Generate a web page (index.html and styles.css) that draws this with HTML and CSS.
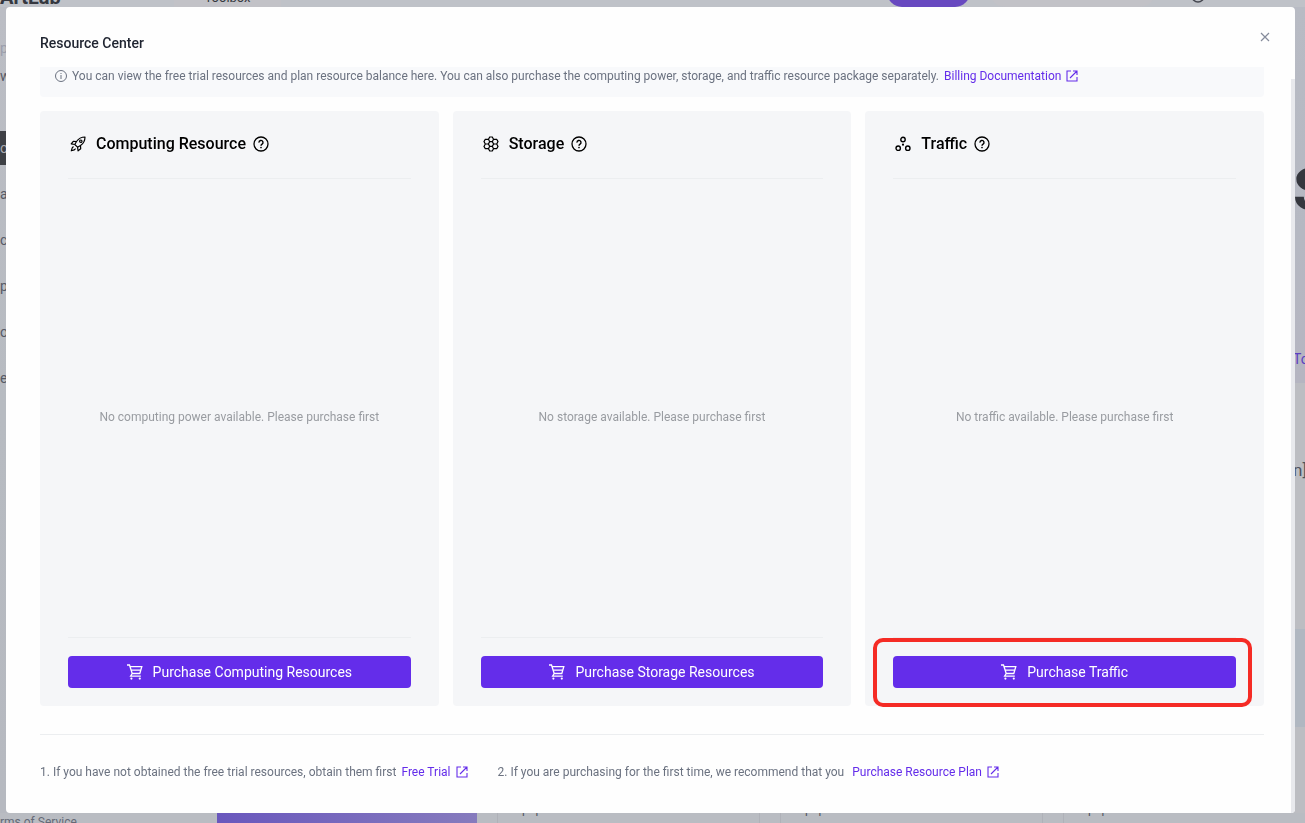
FILE: index.html
```
<!doctype html>
<html lang="en">
<head>
	<meta charset="UTF-8" />
	<title>Resource Center</title>
	<link rel="stylesheet" href="styles.css">
</head>
<body>
	<svg class="sprite" width="0" height="0">
		<symbol id="icon-link" viewBox="0 0 24 24">
			<path d="M10 2H2v20h20v-8M14 2h8v8M22 2L8 16" fill="none" stroke="currentColor" stroke-width="2.2" />
		</symbol>
		<symbol id="icon-help" viewBox="0 0 16 16">
			<circle cx="8" cy="8" r="7" fill="none" stroke="currentColor" stroke-width="1.3" />
			<path d="M6 6.600a2 2 0 1 1 3.100 1.500C8.400 8.600 8 8.900 8 9.700" fill="none" stroke="currentColor" stroke-width="1.400" />
			<circle cx="8" cy="11.500" r=".85" fill="currentColor" />
		</symbol>
		<symbol id="icon-cart" viewBox="0 0 16 16">
			<path d="M0 1h2.500l2.700 8.500h7.600l2-6.800H3.200M5.200 9.500l-1.600 2.700h10.200M4.500 6.200h9" fill="none" stroke="currentColor" stroke-width="1.300" />
			<circle cx="4.400" cy="14.600" r="1.100" fill="currentColor" />
			<circle cx="12.800" cy="14.600" r="1.100" fill="currentColor" />
		</symbol>
	</svg>

	<!-- page behind the dialog -->
	<div class="page">
		<div class="topbar">
			<div class="brand">ArtLab</div>
			<div class="tab">Toolbox</div>
			<div class="pill"></div>
			<div class="search"></div>
			<svg class="user" width="14" height="14" viewBox="0 0 14 14"><circle cx="7" cy="7" r="6" fill="none" stroke="#44464f" stroke-width="1.5" /></svg>
		</div>
		<div class="middle">
			<div class="sidebar">
				<span class="light">p</span>
				<span class="second">w</span>
				<span class="current">oo</span>
				<span>a</span>
				<span>c</span>
				<span>p</span>
				<span>o</span>
				<span>e</span>
			</div>
			<div class="hero">
				<div class="hero-top">
					<div class="headline">S</div>
					<div class="more">To</div>
				</div>
				<div class="note">n]</div>
				<div class="thumb"></div>
			</div>
		</div>
		<div class="bottom">
			<div class="terms">rms of Service</div>
			<div class="promo"></div>
			<div class="tile">pop</div>
			<div class="tile">pop</div>
			<div class="tile">pop</div>
		</div>
	</div>

	<div class="mask">
		<div class="dialog" role="dialog" aria-labelledby="title">
			<div class="dialog-head">
				<h1 id="title">Resource Center</h1>
				<button class="close" aria-label="Close">
					<svg width="10" height="10" viewBox="0 0 10 10"><path d="M1 1l8 8M9 1L1 9" stroke="currentColor" stroke-width="1.2" /></svg>
				</button>
			</div>
			<div class="dialog-body">
				<div class="tip">
					<svg width="12" height="12" viewBox="0 0 12 12"><circle cx="6" cy="6" r="5.500" fill="none" stroke="currentColor" /><path d="M6 5v4M6 3v1" stroke="currentColor" /></svg>
					<span>You can view the free trial resources and plan resource balance here. You can also purchase the computing power, storage, and traffic resource package separately.</span>
					<a href="#">Billing Documentation <svg width="12" height="12"><use href="#icon-link" /></svg></a>
				</div>

				<div class="cards">
					<div class="card">
						<div class="card-head">
							<svg width="16" height="16" viewBox="0 0 16 16" fill="none" stroke="currentColor" stroke-width="1.200" stroke-linejoin="round">
								<path d="M15 1c-4 0-6.500 1.500-8.500 4.500L4.800 8.500l2.700 2.700 3-1.700C13.500 7.500 15 5 15 1z" />
								<path d="M6.500 5.500L3.300 5.300 1.200 7.900l3.600.6M10.500 9.500l.2 3.200-2.600 2.100-.6-3.600M3.500 10.500l-1.300 1.300-.9 3 3-.9 1.300-1.300" />
								<circle cx="10.800" cy="5.200" r="1.200" />
							</svg>
							<h2>Computing Resource</h2>
							<svg class="help" width="16" height="16"><use href="#icon-help" /></svg>
						</div>
						<div class="empty">No computing power available. Please purchase first</div>
						<div class="card-foot">
							<button class="buy"><svg width="16" height="16"><use href="#icon-cart" /></svg>Purchase Computing Resources</button>
						</div>
					</div>
					<div class="card">
						<div class="card-head">
							<svg width="16" height="16" viewBox="0 0 16 16" fill="none" stroke="currentColor" stroke-width="1.200">
								<path d="M6.700 5.700h2.600L10.600 8l-1.300 2.300H6.700L5.400 8z" />
								<path d="M6.700 5.700L5.500 3.300 6.700 1h2.600l1.200 2.300-1.200 2.400M6.700 10.300l-1.200 2.400L6.700 15h2.600l1.200-2.300-1.200-2.400" />
								<path d="M5.500 3.300H2.300L1 5.600 2.300 8 1 10.400l1.300 2.300h3.200M2.300 8h3.100M10.500 3.300h3.200L15 5.600 13.700 8l1.300 2.400-1.300 2.300h-3.200M10.600 8h3.100" />
							</svg>
							<h2>Storage</h2>
							<svg class="help" width="16" height="16"><use href="#icon-help" /></svg>
						</div>
						<div class="empty">No storage available. Please purchase first</div>
						<div class="card-foot">
							<button class="buy"><svg width="16" height="16"><use href="#icon-cart" /></svg>Purchase Storage Resources</button>
						</div>
					</div>
					<div class="card">
						<div class="card-head">
							<svg width="16" height="16" viewBox="0 0 16 16" fill="none" stroke="currentColor" stroke-width="1.400">
								<circle cx="8" cy="3.500" r="2.200" />
								<circle cx="3.200" cy="12.200" r="2.200" />
								<circle cx="12.800" cy="12.200" r="2.200" />
								<circle cx="8" cy="8.700" r="1.100" fill="currentColor" stroke="none" />
							</svg>
							<h2>Traffic</h2>
							<svg class="help" width="16" height="16"><use href="#icon-help" /></svg>
						</div>
						<div class="empty">No traffic available. Please purchase first</div>
						<div class="card-foot marked">
							<button class="buy"><svg width="16" height="16"><use href="#icon-cart" /></svg>Purchase Traffic</button>
						</div>
					</div>
				</div>

				<div class="notes">
					<p>1. If you have not obtained the free trial resources, obtain them first <a href="#">Free Trial <svg width="12" height="12"><use href="#icon-link" /></svg></a></p>
					<p>2. If you are purchasing for the first time, we recommend that you <a class="plan" href="#">Purchase Resource Plan <svg width="12" height="12"><use href="#icon-link" /></svg></a></p>
				</div>
			</div>
			<div class="scrollbar"></div>
		</div>
	</div>
</body>
</html>
```
FILE: styles.css
```
*{
	box-sizing: border-box;
	padding: 0;
	margin: 0;
}
body{
	height: 100vh;
	overflow: hidden;
	font: 12px/20px Roboto, "Liberation Sans", sans-serif;
	color: #6b7280;
}
a{
	display: inline-flex;
	align-items: center;
	gap: 5px;
	color: #642dea;
	text-decoration: none;
}
button{
	border: 0;
	font-family: inherit;
	cursor: pointer;
}
.sprite{
	position: absolute;
}

/* page behind */
.page{
	display: flex;
	flex-direction: column;
	height: 100vh;
	background: #babcc3;
}
.topbar{
	display: flex;
	align-items: flex-end;
	height: 7px;
	overflow: hidden;
	background: #bfc2c8;
}
.topbar > *,
.bottom > *{
	flex-shrink: 0;
}
.brand{
	width: 174px;
	font-size: 20px;
	font-weight: 700;
	line-height: 20px;
	color: #353840;
}
.tab{
	width: 107px;
	height: 20px;
	line-height: 22px;
	font-size: 13px;
	text-align: center;
	color: #353840;
	background: #c2c2c7;
}
.pill{
	width: 83px;
	height: 30px;
	margin-left: 606px;
	border-radius: 15px;
	background: #6849c0;
}
.search{
	width: 165px;
	height: 30px;
	margin: 0 36px 0 20px;
	border-radius: 15px;
	background: #c2c2c7;
}
.user{
	margin-bottom: 4px;
}
.middle{
	flex: 1;
	display: flex;
	justify-content: space-between;
	min-height: 0;
}
.sidebar{
	width: 174px;
	padding-top: 30px;
	font-size: 14px;
	color: #565a66;
	background: linear-gradient(#bbbdc4, #b7bbc1 50%, #b6b9c0);
}
.sidebar span{
	display: block;
	height: 34px;
	margin-bottom: 12px;
	line-height: 34px;
}
.sidebar .light{
	height: 22px;
	margin: 0;
	line-height: 22px;
	color: #9a9eab;
}
.sidebar .second{
	margin-bottom: 38px;
}
.sidebar .current{
	color: #a9abb0;
	background: #3e4045;
}
.hero{
	width: 12px;
	background: #bcbdc2;
}
.hero-top{
	height: 376px;
	padding-top: 148px;
	background: linear-gradient(#b8bbc4, #b5b8c2 60%, #b5b5c1);
}
.headline{
	font-size: 60px;
	font-weight: 700;
	line-height: 70px;
	color: #35373e;
}
.more{
	margin-top: 124px;
	font-size: 14px;
	color: #5c3fc0;
}
.note{
	padding-top: 77px;
	font-size: 17px;
	color: #50535e;
}
.thumb{
	height: 98px;
	margin-top: 149px;
	background: #b0b7c1;
}
.bottom{
	display: flex;
	height: 10px;
	overflow: hidden;
	background: #b9bcc2;
}
.terms{
	width: 174px;
	margin-right: 43px;
	line-height: 18px;
	color: #656976;
}
.promo{
	width: 260px;
	background: linear-gradient(90deg, #6957bd, #867bbd);
}
.tile{
	width: 263px;
	height: 20px;
	margin: -4px 0 0 20px;
	padding-left: 24px;
	border: solid #afb1b8;
	border-width: 0 1px;
	line-height: 0;
	color: #50535e;
}

/* dialog */
.mask{
	position: fixed;
	inset: 0;
	display: flex;
	padding: 7px 10px 10px 6px;
}
.dialog{
	position: relative;
	flex: 1;
	display: flex;
	flex-direction: column;
	overflow: hidden;
	border-radius: 4px;
	background: #fefefe;
}
.dialog-head{
	display: flex;
	justify-content: space-between;
	height: 60px;
	padding: 20px 20px 0 34px;
}
.dialog-head h1{
	padding-top: 6px;
	font-size: 14px;
	font-weight: 500;
	line-height: 20px;
	color: #1f2430;
}
.close{
	display: flex;
	align-items: center;
	justify-content: center;
	width: 20px;
	height: 20px;
	color: #858b9b;
	background: none;
}
.dialog-body{
	flex: 1;
	display: flex;
	flex-direction: column;
	padding: 0 31px 0 34px;
}
.tip{
	display: flex;
	gap: 5px;
	height: 30px;
	padding: 0 15px;
	line-height: 18px;
	border-radius: 0 0 4px 4px;
	background: #f8f9fb;
}
.tip > svg{
	margin-top: 3px;
}
.tip a{
	height: 18px;
}
.cards{
	flex: 1;
	display: flex;
	gap: 14px;
	margin-top: 14px;
}
.card{
	flex: 1;
	display: flex;
	flex-direction: column;
	padding: 0 28px 18px;
	border-radius: 4px;
	background: #f5f6f8;
}
.card-head{
	display: flex;
	align-items: center;
	height: 68px;
	padding: 0 0 2px 2px;
	border-bottom: 1px solid #eceef0;
	color: #000;
}
.card-head h2{
	margin: 0 7px 0 10px;
	font-size: 16px;
	font-weight: 500;
	line-height: 24px;
}
.empty{
	flex: 1;
	display: flex;
	align-items: center;
	justify-content: center;
	padding-top: 18px;
	color: #999ca1;
}
.card-foot{
	position: relative;
	padding-top: 18px;
	border-top: 1px solid #eceef0;
}
.buy{
	display: flex;
	align-items: center;
	justify-content: center;
	gap: 10px;
	width: 100%;
	height: 32px;
	border-radius: 4px;
	font-size: 14px;
	color: #fff;
	background: #642dea;
}
/* red frame round the traffic button */
.marked::after{
	content: "";
	position: absolute;
	inset: 0 -16px -19px -20px;
	border: 4px solid #f52b25;
	border-radius: 10px;
	pointer-events: none;
}
.notes{
	display: flex;
	gap: 30px;
	height: 79px;
	margin-top: 28px;
	padding-top: 27px;
	border-top: 1px solid #eceef0;
}
.notes p{
	display: flex;
	gap: 5px;
	height: 20px;
}
.notes .plan{
	margin-left: 3px;
}
.scrollbar{
	position: absolute;
	top: 72px;
	right: 0;
	bottom: 0;
	width: 4px;
	background: #e8e9ed;
}
```
